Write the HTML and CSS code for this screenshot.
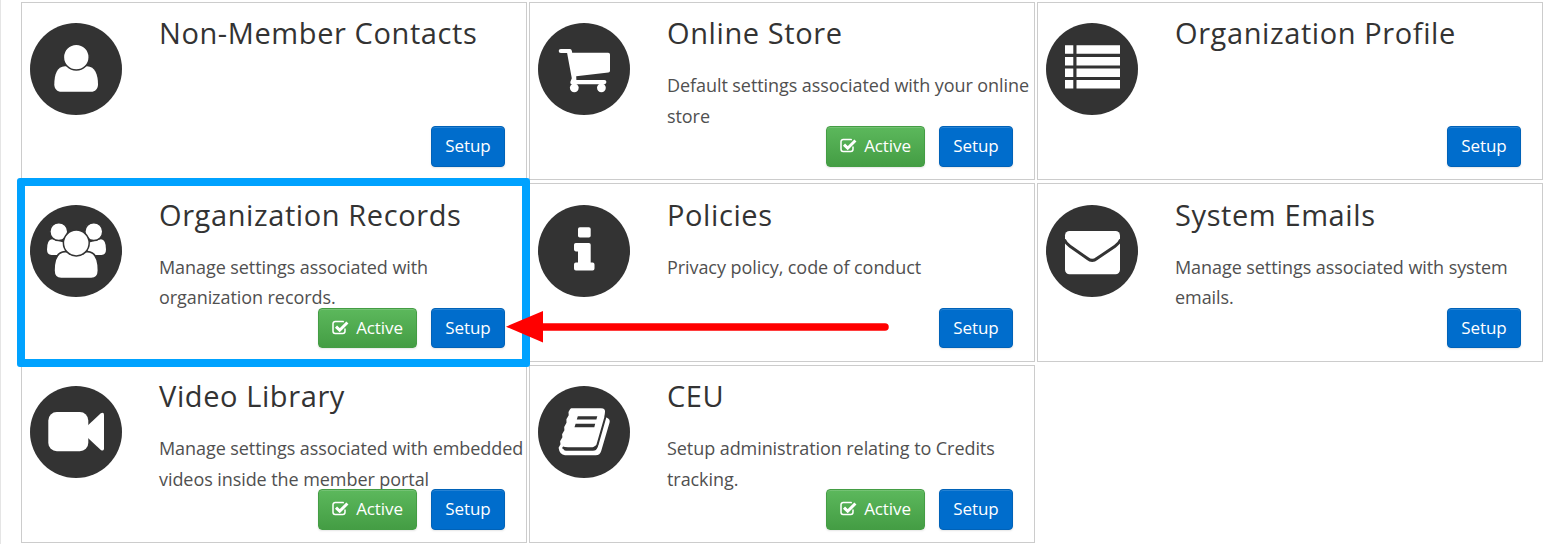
FILE: index.html
```html
<!DOCTYPE html>
<html lang="en">
<head>
  <meta charset="UTF-8" />
  <meta name="viewport" content="width=device-width, initial-scale=1.0"/>
  <title>Setup Modules</title>
  <link rel="stylesheet" href="styles.css">
</head>
<body>
  <svg class="symbols" width="0" height="0">
    <symbol id="check" viewBox="0 0 17 15">
      <path d="M13 8.6v2.6a2.2 2.2 0 0 1-2.2 2.2H3.2A2.2 2.2 0 0 1 1 11.2V3.7a2.2 2.2 0 0 1 2.2-2.2h7.6q.5 0 1 .2" fill="none" stroke="#fff" stroke-width="1.5"/>
      <path d="M4 6.600l3.700 3.600 7.700-7.700" fill="none" stroke="#fff" stroke-width="3"/>
    </symbol>
  </svg>

  <div class="modules">
    <div class="card">
      <svg class="icon" viewBox="0 0 92 92" fill="#fff">
        <circle cx="46" cy="46" r="46" fill="#333"/>
        <path d="M35 43.300C27 43.300 24.300 52 24.300 61.500c0 4.500 3 7.300 7 7.300h29.700c4 0 7-2.800 7-7.300C68 52 65 43.300 57 43.300z"/>
        <circle cx="46.300" cy="34.200" r="12.900" stroke="#333" stroke-width="1.500"/>
      </svg>
      <div class="info">
        <h2>Non-Member Contacts</h2>
      </div>
      <div class="actions">
        <a class="btn btn-setup">Setup</a>
      </div>
    </div>

    <div class="card">
      <svg class="icon" viewBox="0 0 92 92" fill="#fff">
        <circle cx="46" cy="46" r="46" fill="#333"/>
        <path d="M22.800 26h9.200q1.500 0 1.800 1.800l.4 2h36q1.800 0 1.800 1.800v16.200q0 1.500-1.600 1.700L38.200 53.200l.2 3.800h28q2 0 2 2.100t-2 2.100H34q-2 0-1.700-2.200l1.500-3.700L29.100 30.100h-6.300q-2.100 0-2.100-2.050T22.800 26z"/>
        <circle cx="36.300" cy="64.800" r="4.400"/>
        <circle cx="63.400" cy="64.800" r="4.400"/>
      </svg>
      <div class="info">
        <h2>Online Store</h2>
        <p>Default settings associated with your online store</p>
      </div>
      <div class="actions">
        <a class="btn btn-active"><svg class="check"><use href="#check"/></svg>Active</a>
        <a class="btn btn-setup">Setup</a>
      </div>
    </div>

    <div class="card">
      <svg class="icon" viewBox="0 0 92 92" fill="#fff">
        <circle cx="46" cy="46" r="46" fill="#333"/>
        <path d="M19 22.200h8.300v8.600H19zM30.500 22.200H74v8.600H30.500zM19 34h8.300v8.400H19zM30.500 34H74v8.400H30.500zM19 45.400h8.300V54H19zM30.500 45.400H74V54H30.500zM19 57h8.300v8.400H19zM30.500 57H74v8.400H30.500z"/>
      </svg>
      <div class="info">
        <h2>Organization Profile</h2>
      </div>
      <div class="actions">
        <a class="btn btn-setup">Setup</a>
      </div>
    </div>

    <div class="card middle selected">
      <svg class="icon" viewBox="0 0 92 92" fill="#fff">
        <circle cx="46" cy="46" r="46" fill="#333"/>
        <path d="M22 34.200q-5 .3-5 10.500 0 5 4.500 5.200h14V38z"/>
        <path d="M71 34.200q5 .3 5 10.500 0 5-4.500 5.200h-14V38z"/>
        <circle cx="28.800" cy="26.600" r="8.900" stroke="#333" stroke-width="1.400"/>
        <circle cx="63.800" cy="26.600" r="8.900" stroke="#333" stroke-width="1.400"/>
        <path stroke="#333" stroke-width="1.600" d="M35 46.600C27 47 24 55.500 24 65.500c0 5 3 8 7.200 8h30c4.200 0 7.200-3 7.200-8C68.400 55.500 65.500 47 57.500 46.600z"/>
        <circle cx="46.300" cy="38" r="12.900" stroke="#333" stroke-width="1.500"/>
      </svg>
      <div class="info">
        <h2>Organization Records</h2>
        <p>Manage settings associated with organization records.</p>
      </div>
      <div class="actions">
        <a class="btn btn-active"><svg class="check"><use href="#check"/></svg>Active</a>
        <a class="btn btn-setup">Setup</a>
      </div>
    </div>

    <div class="card middle">
      <svg class="icon" viewBox="0 0 92 92" fill="#fff">
        <circle cx="46" cy="46" r="46" fill="#333"/>
        <rect x="40" y="22.200" width="12.700" height="10.400" rx="1.800"/>
        <path d="M37.800 37.900h13.100q1.800 0 1.800 1.800v17.800h1.900q1.900 0 1.900 1.900v4.200q0 1.900-1.900 1.900H37.900q-1.900 0-1.900-1.900v-4.200q0-1.900 1.900-1.900H40V46.400h-2.200q-1.800 0-1.800-1.800v-4.900q0-1.800 1.800-1.800z"/>
      </svg>
      <div class="info">
        <h2>Policies</h2>
        <p>Privacy policy, code of conduct</p>
      </div>
      <div class="actions">
        <a class="btn btn-setup">Setup</a>
      </div>
    </div>

    <div class="card middle">
      <svg class="icon" viewBox="0 0 92 92" fill="#fff">
        <circle cx="46" cy="46" r="46" fill="#333"/>
        <rect x="19" y="26" width="55" height="43.200" rx="4.500"/>
        <path d="M18.300 34.500Q20 38.500 24 41.200L41.500 53.500q4.700 3.800 9.400 0L69 41.200q4-2.700 5.700-6.700" fill="none" stroke="#333" stroke-width="3"/>
      </svg>
      <div class="info">
        <h2>System Emails</h2>
        <p>Manage settings associated with system emails.</p>
      </div>
      <div class="actions">
        <a class="btn btn-setup">Setup</a>
      </div>
    </div>

    <div class="card">
      <svg class="icon" viewBox="0 0 92 92" fill="#fff">
        <circle cx="46" cy="46" r="46" fill="#333"/>
        <rect x="18.300" y="26" width="40" height="39.200" rx="8.500"/>
        <path d="M58 39.200L70.800 27.300Q74 25.800 74 29v33.500q0 3.200-3.200 1.500L58 52z"/>
      </svg>
      <div class="info">
        <h2>Video Library</h2>
        <p>Manage settings associated with embedded videos inside the member portal</p>
      </div>
      <div class="actions">
        <a class="btn btn-active"><svg class="check"><use href="#check"/></svg>Active</a>
        <a class="btn btn-setup">Setup</a>
      </div>
    </div>

    <div class="card">
      <svg class="icon" viewBox="0 0 92 92" fill="#fff">
        <circle cx="46" cy="46" r="46" fill="#333"/>
        <path d="M36.500 22.300H63q5 0 3.900 4.700l-.5 3.500L69 31.800q3.500 1.500 2.500 5L63.200 65q-1.200 4.200-5.500 4.200H27q-5.500-.5-6.400-7.500l1.900-3.500-.4-3 2.300-4-.3-3 2.300-4-.2-3.200 2.300-4.200-.1-3.500 2.300-4-.2-3.200q1.800-4 3-3.800z"/>
        <path d="M67.700 30L59.500 58.600q-1.200 3.800-4.600 3.800H30q-4 0-5.500-1" fill="none" stroke="#333" stroke-width="2"/>
        <path d="M25 61.500q.5 3.300 3 3.300h27q3.500 0 4.500-3.500l1-4-3 2.500-3 1.700z" fill="#333"/>
        <path d="M39.800 30.200h19.500l-.9 3.400H38.800zM37.600 37.800h19.600l-.9 3.400H36.500z" fill="#333"/>
      </svg>
      <div class="info">
        <h2>CEU</h2>
        <p>Setup administration relating to Credits tracking.</p>
      </div>
      <div class="actions">
        <a class="btn btn-active"><svg class="check"><use href="#check"/></svg>Active</a>
        <a class="btn btn-setup">Setup</a>
      </div>
    </div>
  </div>

  <!-- pointer to the selected module -->
  <svg class="arrow" viewBox="0 0 384 32">
    <path d="M30 16h349" stroke="#f00" stroke-width="7.500" stroke-linecap="round"/>
    <path d="M0 15.700L37 0v31.500z" fill="#f00"/>
  </svg>
</body>
</html>
```
FILE: styles.css
```css
* {
  box-sizing: border-box;
}
body {
  margin: 0;
  height: 544px;
  position: relative;
  overflow: hidden;
  font-family: 'Open Sans', sans-serif;
  background-color: #fff;
  color: #505050;
  border-left: 1px solid #e5e5e5;
}
.symbols {
  position: absolute;
}
.modules {
  display: grid;
  grid-template-columns: repeat(3, 506px);
  grid-template-rows: 178px 179px 178px;
  gap: 3px 2px;
  padding: 2px 0 0 20px;
}
.card {
  position: relative;
  display: flex;
  align-items: flex-start;
  border: 1px solid #ccc;
}
.icon {
  flex: none;
  width: 92px;
  height: 92px;
  margin: 20px 0 0 8px;
}
.info {
  flex: 1;
  margin-left: 37px;
}
h2 {
  margin: 8px 0 0;
  font-size: 29px;
  font-weight: 400;
  line-height: 44px;
  letter-spacing: 0.6px;
  color: #333;
  white-space: nowrap;
}
p {
  margin: 15px 0 0;
  font-size: 18px;
  line-height: 30.5px;
  letter-spacing: -0.07px;
}
.actions {
  position: absolute;
  right: 21px;
  bottom: 12px;
  display: flex;
  gap: 14px;
}
.btn {
  display: flex;
  align-items: center;
  justify-content: center;
  height: 41px;
  padding-bottom: 2px;
  border-radius: 4px;
  font-size: 17px;
  letter-spacing: -0.1px;
  color: #fff;
  box-shadow: inset 0 1px 0 rgba(255, 255, 255, 0.15), 0 1px 2px rgba(0, 0, 0, 0.1);
}
.btn-setup {
  width: 74px;
  background-color: #006dcc;
  border: 1px solid #0062b8;
}
.btn-active {
  width: 99px;
  background: linear-gradient(#5cb85c, #449d44);
  border: 1px solid #449d44;
}
.check {
  width: 17px;
  height: 15px;
  margin-right: 7px;
}
.middle {
  padding-top: 1px;
}
.middle p {
  line-height: 30px;
}
.middle .actions {
  bottom: 13px;
}
.middle .btn {
  height: 40px;
}
.selected {
  z-index: 1;
}
.selected::after {
  content: "";
  box-sizing: border-box;
  position: absolute;
  left: -5px;
  top: -6px;
  width: 513px;
  height: 189px;
  border: 8px solid #00a2ff;
  border-radius: 3px;
}
.arrow {
  position: absolute;
  z-index: 2;
  left: 505px;
  top: 311px;
  width: 384px;
  height: 32px;
}
```
